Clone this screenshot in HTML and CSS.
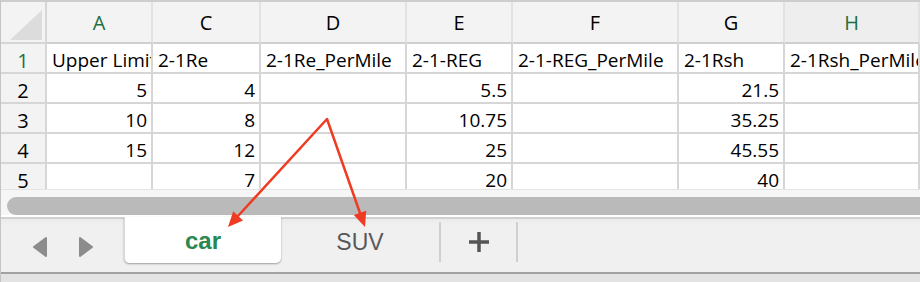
FILE: index.html
```html
<!DOCTYPE html>
<html lang="en">
<head>
  <meta charset="UTF-8">
  <title>car - sheet</title>
  <link rel="stylesheet" href="styles.css">
</head>
<body>
  <div class="window">
    <div class="sheet">
      <div class="corner"><span class="tri"></span></div>
      <div class="colhead sel">A</div>
      <div class="colhead">C</div>
      <div class="colhead">D</div>
      <div class="colhead">E</div>
      <div class="colhead">F</div>
      <div class="colhead">G</div>
      <div class="colhead sel last">H</div>

      <div class="rowhead sel">1</div>
      <div class="cell">Upper Limit</div>
      <div class="cell">2-1Re</div>
      <div class="cell">2-1Re_PerMile</div>
      <div class="cell">2-1-REG</div>
      <div class="cell">2-1-REG_PerMile</div>
      <div class="cell">2-1Rsh</div>
      <div class="cell">2-1Rsh_PerMile</div>

      <div class="rowhead">2</div>
      <div class="cell num">5</div>
      <div class="cell num">4</div>
      <div class="cell"></div>
      <div class="cell num">5.5</div>
      <div class="cell"></div>
      <div class="cell num">21.5</div>
      <div class="cell"></div>

      <div class="rowhead">3</div>
      <div class="cell num">10</div>
      <div class="cell num">8</div>
      <div class="cell"></div>
      <div class="cell num">10.75</div>
      <div class="cell"></div>
      <div class="cell num">35.25</div>
      <div class="cell"></div>

      <div class="rowhead">4</div>
      <div class="cell num">15</div>
      <div class="cell num">12</div>
      <div class="cell"></div>
      <div class="cell num">25</div>
      <div class="cell"></div>
      <div class="cell num">45.55</div>
      <div class="cell"></div>

      <div class="rowhead">5</div>
      <div class="cell"></div>
      <div class="cell num">7</div>
      <div class="cell"></div>
      <div class="cell num">20</div>
      <div class="cell"></div>
      <div class="cell num">40</div>
      <div class="cell"></div>
    </div>

    <div class="gap"></div>
    <div class="hscroll"><div class="thumb"></div></div>

    <div class="tabbar">
      <div class="nav">
        <svg width="123" height="53" viewBox="0 0 123 53">
          <polygon points="33,28 45,19 45,37" fill="#8c8c8c" stroke="#8c8c8c" stroke-width="2" stroke-linejoin="round"/>
          <polygon points="79,19 91,28 79,37" fill="#8c8c8c" stroke="#8c8c8c" stroke-width="2" stroke-linejoin="round"/>
        </svg>
      </div>
      <div class="tab active">car</div>
      <div class="tab">SUV</div>
      <div class="tab add">
        <svg width="22" height="22" viewBox="0 0 22 22">
          <path d="M11 1 V21 M1 11 H21" stroke="#555" stroke-width="3.5"/>
        </svg>
      </div>
    </div>
    <div class="status"></div>

    <svg class="callout" width="920" height="282" viewBox="0 0 920 282">
      <g stroke="#ef3b24" stroke-width="2.5" fill="none" stroke-linecap="round" stroke-linejoin="round">
        <polyline points="238,216 327,119 360,213"/>
      </g>
      <g fill="#ef3b24">
        <polygon points="228,227 243,220.5 233.2,211.3"/>
        <polygon points="365,227 366.2,210.7 353.8,215.1"/>
      </g>
    </svg>
  </div>
</body>
</html>
```

FILE: styles.css
```css
html, body {
  margin: 0;
  padding: 0;
  background: #fff;
  overflow: hidden;
}
.window {
  position: relative;
  width: 920px;
  height: 282px;
  overflow: hidden;
  border-left: 1px solid #c4c4c4;
  box-sizing: border-box;
}
.sheet {
  display: grid;
  grid-template-columns: 46px 106px 108px 146px 106px 166px 106px 1fr;
  grid-template-rows: 42px repeat(5, 30px);
  height: 189px;
  overflow: hidden;
  border-top: 2px solid #cdcdcd;
  box-sizing: border-box;
  font-family: "Open Sans", "Liberation Sans", sans-serif;
  font-size: 19px;
  color: #000;
}
.sheet > div {
  box-sizing: border-box;
  border-right: 2px solid #d6d6d6;
  border-bottom: 2px solid #d6d6d6;
  white-space: nowrap;
  overflow: hidden;
}
.corner {
  background: #f3f3f3;
  position: relative;
}
.corner .tri {
  position: absolute;
  left: 9px;
  top: 8px;
  width: 32px;
  height: 30px;
  background: #dcdcdc;
  clip-path: polygon(100% 0, 100% 100%, 0 100%);
}
.colhead {
  background: #f3f3f3;
  display: flex;
  align-items: center;
  justify-content: center;
  font-size: 20px;
  border-right-color: #e2e2e2 !important;
  border-bottom-color: #cfcfcf !important;
}
.colhead.last {
  background: #eeeeee;
}
.rowhead {
  background: #f3f3f3;
  display: flex;
  align-items: flex-end;
  justify-content: center;
  padding-bottom: 2px;
  line-height: 19px;
  font-size: 20px;
}
.sel {
  color: #1f6e43;
}
.cell {
  display: flex;
  align-items: flex-end;
  padding: 0 4px 2px 5px;
  line-height: 19px;
}
.cell.num {
  justify-content: flex-end;
}
.gap {
  height: 8px;
  background: #f6f6f6;
  border-top: 1px solid #e4e4e4;
  box-sizing: border-box;
}
.hscroll {
  height: 18px;
  padding-left: 6px;
  background: #f6f6f6;
  border-bottom: 2px solid #fff;
}
.thumb {
  height: 18px;
  background: #bababa;
  border-radius: 9px 0 0 9px;
}
.tabbar {
  display: flex;
  align-items: flex-start;
  height: 53px;
  background: linear-gradient(#ebebeb, #f0f0f0 6px);
  border-top: 2px solid #d0d0d0;
  border-bottom: 2px solid #a2a2a2;
  font-family: "Liberation Sans", Arial, sans-serif;
  font-size: 23px;
}
.nav {
  width: 123px;
  height: 53px;
}
.nav svg {
  display: block;
}
.tab {
  box-sizing: border-box;
  display: flex;
  align-items: center;
  justify-content: center;
  width: 160px;
  height: 40px;
  margin-top: 3px;
  border-right: 2px solid #cfcfcf;
  color: #585858;
}
.tab.active {
  width: 157px;
  height: 46px;
  margin-top: -2px;
  padding-top: 1px;
  background: #fff;
  border-right: none;
  border-left: 1px solid #d8d8d8;
  border-radius: 0 0 5px 5px;
  box-shadow: 0 1px 2px rgba(0, 0, 0, 0.35);
  color: #2b8750;
  font-weight: bold;
  font-size: 24px;
}
.tab.add {
  width: 77px;
}
.tab.add svg {
  display: block;
}
.status {
  height: 8px;
  background: #e3e3e3;
}
.callout {
  position: absolute;
  left: -1px;
  top: 0;
  pointer-events: none;
}
```
